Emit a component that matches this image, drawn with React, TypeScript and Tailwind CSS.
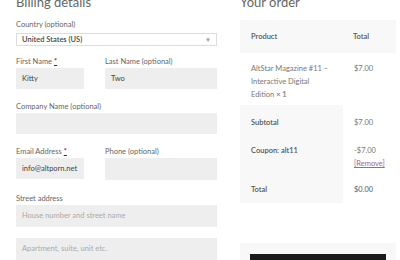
export default function App() {
  return (
    <main className="w-[400px] h-[260px] overflow-hidden bg-white font-['Lato',sans-serif] text-[7.5px] text-[#666]">
      <div className="flex pl-4 gap-[23px] -mt-[7px]">
        {/* Billing */}
        <section className="w-[201px] shrink-0">
          <h2 className="text-[13px] leading-[19px] text-[#666]">Billing details</h2>

          <label className="block mt-[7px] leading-[12px]">Country (optional)</label>
          <div className="mt-[2px] h-[13px] border border-[#ddd] bg-white flex items-center justify-between px-[5px]">
            <span className="font-semibold text-[#444]">United States (US)</span>
            <span className="text-[6px] text-[#999]">▼</span>
          </div>

          <div className="flex mt-[10px]">
            <div className="w-[68px]">
              <label className="block leading-[12px]">
                First Name <span className="text-[#a00] underline">*</span>
              </label>
              <div className="h-[21px] bg-[#eee] flex items-center px-[6px] text-[#444]">Kitty</div>
            </div>
            <div className="ml-[21px] flex-1">
              <label className="block leading-[12px]">Last Name (optional)</label>
              <div className="h-[21px] bg-[#eee] flex items-center px-[6px] text-[#444]">Two</div>
            </div>
          </div>

          <label className="block mt-[12px] leading-[12px]">Company Name (optional)</label>
          <div className="h-[21px] bg-[#eee]" />

          <div className="flex mt-[12px]">
            <div className="w-[68px]">
              <label className="block leading-[12px]">
                Email Address <span className="text-[#a00] underline">*</span>
              </label>
              <div className="h-[21px] bg-[#eee] flex items-center px-[6px] text-[#444]">info@altporn.net</div>
            </div>
            <div className="ml-[21px] flex-1">
              <label className="block leading-[12px]">Phone (optional)</label>
              <div className="h-[22px] bg-[#eee]" />
            </div>
          </div>

          <label className="block mt-[13px] leading-[12px]">Street address</label>
          <div className="h-[22px] bg-[#eee] flex items-center px-[6px] text-[#aaa]">House number and street name</div>
          <div className="mt-[11px] h-[22px] bg-[#eee] flex items-center px-[6px] text-[#aaa]">Apartment, suite, unit etc.</div>
        </section>

        {/* Order */}
        <section className="w-[156px] shrink-0">
          <h2 className="text-[13px] leading-[19px] text-[#666]">Your order</h2>

          <div className="mt-[8px] leading-[13px]">
            <div className="grid grid-cols-[103px_1fr] h-[33px] items-center bg-[#f8f8f8] font-semibold text-[#555]">
              <span className="pl-[11px]">Product</span>
              <span className="pl-[10px]">Total</span>
            </div>
            <div className="grid grid-cols-[103px_1fr] pt-[9px] pb-[4px] text-[#777]">
              <span className="pl-[11px] pr-[14px]">
                AltStar Magazine #11 – Interactive Digital Edition <strong className="font-semibold">×&nbsp;1</strong>
              </span>
              <span className="pl-[11px]">$7.00</span>
            </div>
            <div className="grid grid-cols-[103px_1fr]">
              <span className="bg-[#f8f8f8] pl-[11px] pt-[11px] pb-[7px] font-semibold text-[#555]">Subtotal</span>
              <span className="pl-[11px] pt-[11px] text-[#777]">$7.00</span>
            </div>
            <div className="grid grid-cols-[103px_1fr]">
              <span className="bg-[#f8f8f8] pl-[11px] pt-[8px] pb-[19px] font-semibold text-[#555]">Coupon: alt11</span>
              <span className="pl-[11px] pt-[8px] text-[#777]">
                -$7.00
                <br />
                <a href="#" className="text-[#a46497] underline">[Remove]</a>
              </span>
            </div>
            <div className="grid grid-cols-[103px_1fr]">
              <span className="bg-[#f8f8f8] pl-[11px] py-[7px] font-semibold text-[#555]">Total</span>
              <span className="pl-[11px] py-[7px] font-semibold text-[#777]">$0.00</span>
            </div>
          </div>

          <div className="mt-[40px] bg-[#f8f8f8] pt-[11px] px-[10px] h-[40px]">
            <div className="h-[20px] bg-[#1a1a1a]" />
          </div>
        </section>
      </div>
    </main>
  )
}
